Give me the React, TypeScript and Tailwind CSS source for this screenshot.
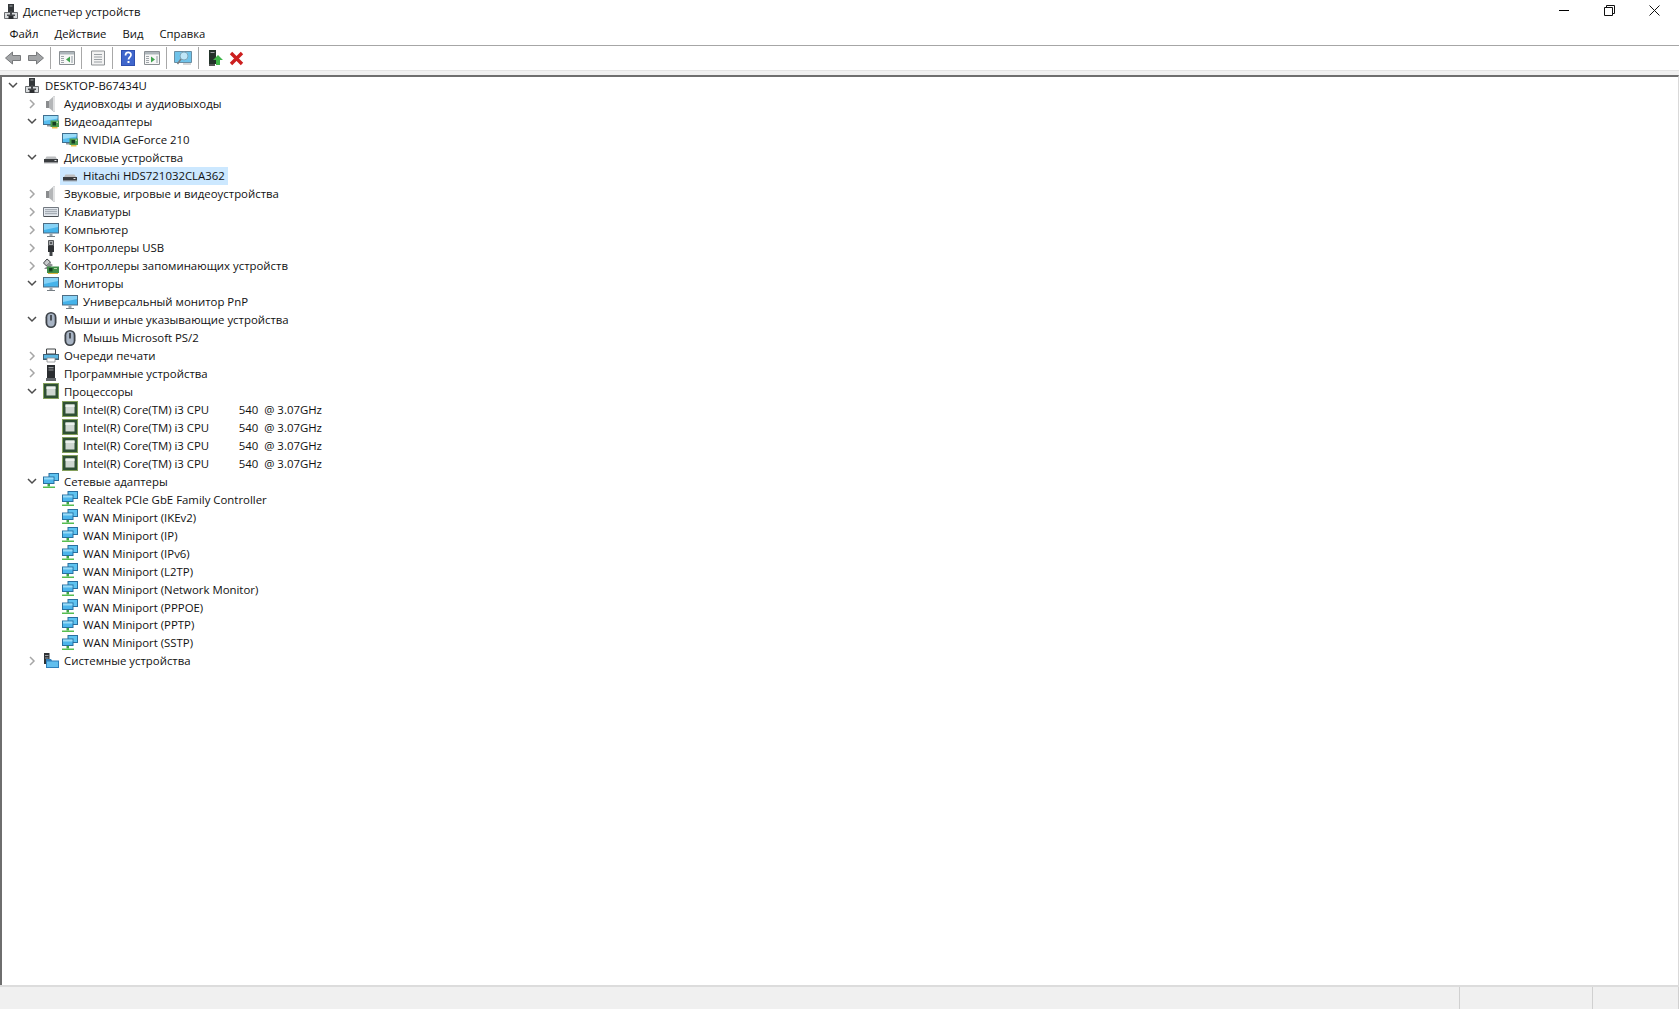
import type { ReactNode } from 'react';

type IconName =
  | 'computer' | 'audio' | 'display' | 'disk' | 'keyboard' | 'monitor' | 'usb'
  | 'storage' | 'mouse' | 'printer' | 'software' | 'cpu' | 'network' | 'system';

type Row = { level: number; label: string; icon: IconName; open?: boolean; selected?: boolean };

const CPU = 'Intel(R) Core(TM) i3 CPU          540  @ 3.07GHz';

const rows: Row[] = [
  { level: 0, label: 'DESKTOP-B67434U', icon: 'computer', open: true },
  { level: 1, label: 'Аудиовходы и аудиовыходы', icon: 'audio', open: false },
  { level: 1, label: 'Видеоадаптеры', icon: 'display', open: true },
  { level: 2, label: 'NVIDIA GeForce 210', icon: 'display' },
  { level: 1, label: 'Дисковые устройства', icon: 'disk', open: true },
  { level: 2, label: 'Hitachi HDS721032CLA362', icon: 'disk', selected: true },
  { level: 1, label: 'Звуковые, игровые и видеоустройства', icon: 'audio', open: false },
  { level: 1, label: 'Клавиатуры', icon: 'keyboard', open: false },
  { level: 1, label: 'Компьютер', icon: 'monitor', open: false },
  { level: 1, label: 'Контроллеры USB', icon: 'usb', open: false },
  { level: 1, label: 'Контроллеры запоминающих устройств', icon: 'storage', open: false },
  { level: 1, label: 'Мониторы', icon: 'monitor', open: true },
  { level: 2, label: 'Универсальный монитор PnP', icon: 'monitor' },
  { level: 1, label: 'Мыши и иные указывающие устройства', icon: 'mouse', open: true },
  { level: 2, label: 'Мышь Microsoft PS/2', icon: 'mouse' },
  { level: 1, label: 'Очереди печати', icon: 'printer', open: false },
  { level: 1, label: 'Программные устройства', icon: 'software', open: false },
  { level: 1, label: 'Процессоры', icon: 'cpu', open: true },
  { level: 2, label: CPU, icon: 'cpu' },
  { level: 2, label: CPU, icon: 'cpu' },
  { level: 2, label: CPU, icon: 'cpu' },
  { level: 2, label: CPU, icon: 'cpu' },
  { level: 1, label: 'Сетевые адаптеры', icon: 'network', open: true },
  { level: 2, label: 'Realtek PCIe GbE Family Controller', icon: 'network' },
  { level: 2, label: 'WAN Miniport (IKEv2)', icon: 'network' },
  { level: 2, label: 'WAN Miniport (IP)', icon: 'network' },
  { level: 2, label: 'WAN Miniport (IPv6)', icon: 'network' },
  { level: 2, label: 'WAN Miniport (L2TP)', icon: 'network' },
  { level: 2, label: 'WAN Miniport (Network Monitor)', icon: 'network' },
  { level: 2, label: 'WAN Miniport (PPPOE)', icon: 'network' },
  { level: 2, label: 'WAN Miniport (PPTP)', icon: 'network' },
  { level: 2, label: 'WAN Miniport (SSTP)', icon: 'network' },
  { level: 1, label: 'Системные устройства', icon: 'system', open: false },
];

function Svg({ children, w = 16, h = 16 }: { children: ReactNode; w?: number; h?: number }) {
  return (
    <svg width={w} height={h} viewBox={`0 0 ${w} ${h}`} className="shrink-0 block">
      {children}
    </svg>
  );
}

function ComputerGlyph() {
  return (
    <>
      <path d="M5 0h6v8H5z" fill="#33373a" />
      <path d="M6.500 1.500h3v1h-3z" fill="#a4a8ab" />
      <path d="M1.500 8.500h13v6h-13z" fill="#d9dcde" stroke="#6a6d70" />
      <path d="M7 7h2v4H7z" fill="#46494c" />
      <path d="M4 10.500h8v1.500H4z" fill="#46494c" />
      <path d="M5.500 12h5v3h-5z" fill="#2a2d30" />
    </>
  );
}

function DeviceIcon({ name }: { name: IconName }) {
  switch (name) {
    case 'computer':
      return <Svg><ComputerGlyph /></Svg>;
    case 'audio':
      return (
        <Svg>
          <path d="M3 5h3v7H3z" fill="#8a8c8e" />
          <path d="M6 4.500L11 0h1v16h-1L6 12z" fill="#b4b6b8" />
          <path d="M10 1l2-1v16l-2-1z" fill="#e0e1e2" />
        </Svg>
      );
    case 'display':
      return (
        <Svg>
          <path d="M0 1h15.500v10H0z" fill="#3f6f8f" />
          <path d="M1 2h13.500v8H1z" fill="#57bdef" />
          <path d="M1 2h13.500v2.500L1 7z" fill="#9adcf8" />
          <path d="M4 11h4v1.500H4z" fill="#8e979c" />
          <path d="M7.500 6.500H16V13H7.500z" fill="#4b9a4e" />
          <path d="M9.500 8h3.500v3.500H9.500z" fill="#173f22" />
          <path d="M13.500 7.500H15V9h-1.500z" fill="#b8dc9e" />
          <path d="M9 13h5.500v1.500H9z" fill="#e6c04a" />
        </Svg>
      );
    case 'disk':
      return (
        <Svg>
          <path d="M2 9l1.500-2.500h9L14 9z" fill="#bcbec0" />
          <path d="M1 9h14v3.500H1z" fill="#3a3d40" />
          <path d="M1 12.500h14v.8H1z" fill="#86898c" />
          <path d="M11.500 10h2v1h-2z" fill="#e2e4e6" />
        </Svg>
      );
    case 'keyboard':
      return (
        <Svg>
          <path d="M.5 3.500h15v9H.5z" fill="#e3e8ee" stroke="#727880" />
          <path d="M2 5h12v1.200H2zM2 7h12v1.200H2zM2 9h12v1.200H2z" fill="#a7aeb6" />
          <path d="M1 12h14v1H1z" fill="#4a4e52" />
        </Svg>
      );
    case 'monitor':
      return (
        <Svg>
          <path d="M0 1h16v10.500H0z" fill="#4d6d84" />
          <path d="M1 2h14v8.500H1z" fill="#45b3ea" />
          <path d="M1 2h14v3L1 8z" fill="#86d2f6" />
          <path d="M6.500 11.500h3V14h-3z" fill="#9aa5ac" />
          <path d="M4 14h8v1H4z" fill="#767e84" />
        </Svg>
      );
    case 'usb':
      return (
        <Svg>
          <path d="M5.500 .5h5v5h-5z" fill="#a5a8ab" stroke="#55585b" />
          <path d="M7 2h2v2H7z" fill="#55585b" />
          <path d="M5 5.500h6V12H5z" fill="#2e3134" />
          <path d="M6.500 12h3v4h-3z" fill="#3f4245" />
        </Svg>
      );
    case 'storage':
      return (
        <Svg>
          <path d="M4 1L.5 5l3 3 4-4z" fill="#c9cbcd" stroke="#3f4245" />
          <path d="M1 11l6-6 3 2-5 4z" fill="#8d9093" />
          <path d="M4 8.500h12V15H4z" fill="#3f8d48" />
          <path d="M6 10h3.500v3.500H6z" fill="#17421f" />
          <path d="M11 10h3v1h-3z" fill="#b3d9a0" />
          <path d="M5 15h10v1H5z" fill="#d8b23a" />
        </Svg>
      );
    case 'mouse':
      return (
        <Svg>
          <rect x="2.500" y="0" width="11" height="16" rx="5.500" fill="#3d4248" />
          <rect x="4.300" y="1.500" width="7.400" height="13" rx="3.700" fill="#a8b4c4" />
          <path d="M7.200 3h1.600v5.500H7.200z" fill="#33373c" />
        </Svg>
      );
    case 'printer':
      return (
        <Svg>
          <path d="M3.500 1h9v5h-9z" fill="#fafafa" stroke="#3f4245" />
          <path d="M0 6h16v6H0z" fill="#3f5f73" />
          <path d="M1 7h14v3.500H1z" fill="#5db7e2" />
          <path d="M4 10h8v4H4z" fill="#fff" stroke="#8b8e91" strokeWidth=".8" />
        </Svg>
      );
    case 'software':
      return (
        <Svg>
          <path d="M4 0h8v13H4z" fill="#2a2d30" />
          <path d="M5.500 2h5v1.200h-5zM5.500 4.500h5v1h-5z" fill="#8f9396" />
          <path d="M3 13h10v3H3z" fill="#62666a" />
        </Svg>
      );
    case 'cpu':
      return (
        <Svg>
          <path d="M0 0h16v16H0z" fill="#84a05c" />
          <path d="M1 1h14v14H1z" fill="#2f5034" />
          <path d="M3.500 3.500h9v9h-9z" fill="#cfd7d1" />
          <path d="M3.500 3.500h9v2.500h-9z" fill="#ecf0ed" />
        </Svg>
      );
    case 'network':
      return (
        <Svg>
          <path d="M5.500 0H16v8H5.500z" fill="#2a6f9f" />
          <path d="M6.500 1H15v6H6.500z" fill="#5fc3f0" />
          <path d="M0 3.500h11.500V11H0z" fill="#2a6f9f" />
          <path d="M1 4.500h9.500V10H1z" fill="#4db6ec" />
          <path d="M1 4.500h9.500v2H1z" fill="#9bdcf8" />
          <path d="M4.500 11h2.500v2.500H4.500z" fill="#3ea544" />
          <path d="M0 13.500h12V15H0z" fill="#56bd52" />
        </Svg>
      );
    case 'system':
      return (
        <Svg>
          <path d="M1 0h5.500v11H1z" fill="#2f3336" />
          <path d="M2 2h3.500v1H2zM2 4.500h3.500v1H2z" fill="#9ea2a5" />
          <path d="M3 6h5l1 1.500h7V15H3z" fill="#2f7fba" />
          <path d="M4 8.500h11V14H4z" fill="#62bfee" />
        </Svg>
      );
  }
}

function Chevron({ open }: { open?: boolean }) {
  if (open === undefined) return <span className="w-[22px] shrink-0" />;
  return (
    <span className="w-[22px] shrink-0 flex items-center justify-center">
      {open ? (
        <svg width="10" height="7" viewBox="0 0 10 7" fill="none">
          <path d="M1 1l4 4 4-4" stroke="#4d4d4d" strokeWidth="1.500" />
        </svg>
      ) : (
        <svg width="7" height="10" viewBox="0 0 7 10" fill="none">
          <path d="M1 1l4 4-4 4" stroke="#a6a6a6" strokeWidth="1.500" />
        </svg>
      )}
    </span>
  );
}

function TreeRow({ row }: { row: Row }) {
  const pad = row.level === 0 ? 'pl-0' : row.level === 1 ? 'pl-[19px]' : 'pl-[36px]';
  const inner = row.level === 2 ? 'pl-[2px]' : '';
  return (
    <div className={`h-[17.97px] flex items-center ${pad}`}>
      <Chevron open={row.open} />
      <div className={`h-[18px] flex items-center ${inner} ${row.selected ? 'bg-[#cce8ff]' : ''}`}>
        <DeviceIcon name={row.icon} />
        <span className="pl-[5px] pr-[3px] whitespace-pre">{row.label}</span>
      </div>
    </div>
  );
}

function Sep({ ml }: { ml: string }) {
  return <span className={`w-px h-[22px] bg-[#a8a8a8] shrink-0 ${ml}`} />;
}

function PanelIcon({ arrow }: { arrow: 'left' | 'right' }) {
  return (
    <Svg>
      <path d="M.5 1.500h15v13H.5z" fill="#f7f7f7" stroke="#8a8f93" />
      <path d="M1 2h14v2.500H1z" fill="#aeb6bb" />
      <path d="M2 6h3v1H2zM2 8h3v1H2zM2 10h3v1H2zM2 12h3v1H2z" fill="#9fa5a9" />
      {arrow === 'left' ? (
        <path d="M11 6.500v6l-4-3z" fill="#3fa34d" />
      ) : (
        <path d="M7 6.500v6l4-3z" fill="#3fa34d" />
      )}
      <path d="M12 6h2v7h-2z" fill="#c4cacd" />
    </Svg>
  );
}

function Toolbar() {
  return (
    <div className="h-[24px] flex items-center pl-[5px] bg-white">
      <Svg>
        <path d="M.5 8l7-6v3.500h8v5h-8V14z" fill="#a3a5a7" stroke="#77797b" />
      </Svg>
      <span className="ml-[7px]">
        <Svg>
          <path d="M15.500 8l-7-6v3.500h-8v5h8V14z" fill="#a3a5a7" stroke="#77797b" />
        </Svg>
      </span>
      <Sep ml="ml-[6px]" />
      <span className="ml-[8px]"><PanelIcon arrow="left" /></span>
      <Sep ml="ml-[6px]" />
      <span className="ml-[8px]">
        <Svg>
          <path d="M1.500 1h13v14h-13z" fill="#f2f2f2" stroke="#8d9194" />
          <path d="M4 4h8v1H4zM4 6.500h8v1H4zM4 9h8v1H4zM4 11.500h8v1H4z" fill="#9aa0a4" />
        </Svg>
      </span>
      <Sep ml="ml-[6px]" />
      <span className="ml-[8px]">
        <Svg w={14}>
          <path d="M0 0h14v16H0z" fill="#2f4fb0" />
          <path d="M1 1h12v14H1z" fill="#3f66cc" />
          <path d="M4.500 5.500c0-4 5.500-4 5.500-.6 0 2-2.500 2.400-2.500 4.600" fill="none" stroke="#fff" strokeWidth="1.700" />
          <path d="M6.500 11h2v2h-2z" fill="#fff" />
        </Svg>
      </span>
      <span className="ml-[9px]"><PanelIcon arrow="right" /></span>
      <Sep ml="ml-[6px]" />
      <span className="ml-[7px]">
        <Svg w={18}>
          <path d="M.5 1.500h17v11H.5z" fill="#6fc3ea" stroke="#6a8ea3" />
          <circle cx="10" cy="6" r="4" fill="#bfe6f8" stroke="#7fa6ba" />
          <path d="M7 9l-3.500 5" stroke="#7a7d80" strokeWidth="1.500" />
          <path d="M9 13.500h8v1H9z" fill="#a9adb0" />
        </Svg>
      </span>
      <Sep ml="ml-[6px]" />
      <span className="ml-[8px]">
        <Svg>
          <path d="M2 0h7v14H2z" fill="#23332a" />
          <path d="M3.500 2h4v1h-4z" fill="#9aa0a4" />
          <path d="M2 14h6v2H2z" fill="#555" />
          <path d="M11 5l5 5h-3v5H9v-5H6z" fill="#3fb54a" />
        </Svg>
      </span>
      <span className="ml-[6px]">
        <Svg w={15} h={15}>
          <path d="M2 2l11 11M13 2L2 13" stroke="#cc1f1f" strokeWidth="3.400" />
        </Svg>
      </span>
    </div>
  );
}

export default function App() {
  return (
    <div className="w-[1679px] h-[1009px] flex flex-col bg-white text-[11.4px] text-[#111] overflow-hidden font-['Open_Sans','Liberation_Sans',sans-serif]">
      <div className="h-[23px] flex items-center">
        <div className="pl-[3px] pr-[4px]"><Svg><ComputerGlyph /></Svg></div>
        <span>Диспетчер устройств</span>
        <div className="ml-auto flex self-start pr-[2px]">
          <div className="w-[46px] h-[21px] flex items-center justify-center">
            <span className="w-[10px] h-px bg-black" />
          </div>
          <div className="w-[44px] h-[21px] flex items-center justify-center">
            <svg width="11" height="11" viewBox="0 0 11 11" fill="none" stroke="#111">
              <path d="M.5 2.500h8v8h-8z" />
              <path d="M2.500 2.500V.5h8v8H8.500" />
            </svg>
          </div>
          <div className="w-[46px] h-[21px] flex items-center justify-center">
            <svg width="11" height="11" viewBox="0 0 11 11" fill="none" stroke="#111">
              <path d="M.5.5l10 10M10.500.5l-10 10" />
            </svg>
          </div>
        </div>
      </div>
      <div className="h-[23px] flex items-center pl-[1.5px] text-[11.3px] border-b border-[#a6a6a6]">
        {['Файл', 'Действие', 'Вид', 'Справка'].map(item => (
          <span key={item} className="px-[8px]">{item}</span>
        ))}
      </div>
      <Toolbar />
      <div className="h-[5px] bg-[#f0f0f0] border-t border-[#e3e3e3]" />
      <div className="flex-1 border-t-2 border-l-2 border-r border-t-[#6e6e6e] border-l-[#6e6e6e] border-r-[#d9d9d9] bg-white">
        {rows.map((row, i) => (
          <TreeRow key={i} row={row} />
        ))}
      </div>
      <div className="h-[24px] bg-[#f0f0f0] border-t-2 border-[#dcdcdc] flex justify-end">
        <span className="w-[133px] border-l border-[#d0d0d0]" />
        <span className="w-[87px] border-l border-r border-[#d0d0d0]" />
      </div>
    </div>
  );
}
